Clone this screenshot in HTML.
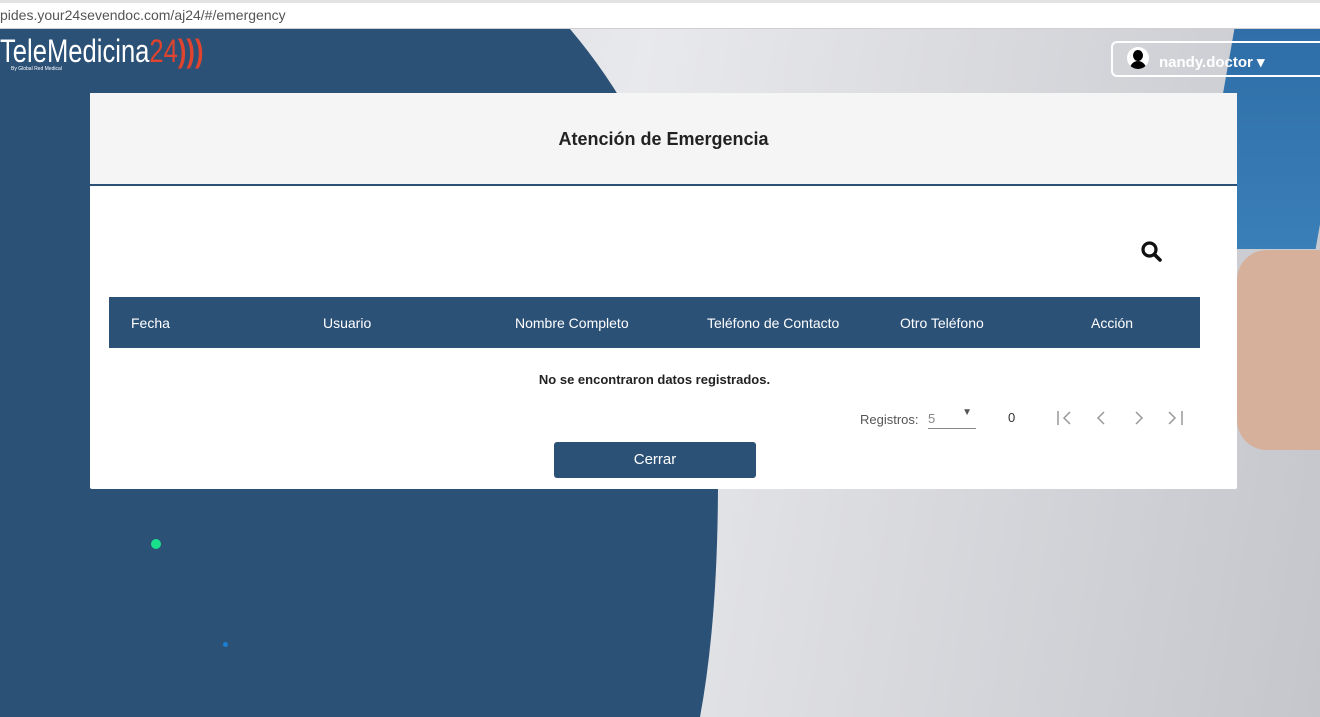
<!DOCTYPE html>
<html><head><meta charset="utf-8"><style>
*{margin:0;padding:0;box-sizing:border-box}
html,body{width:1320px;height:717px;overflow:hidden}
body{font-family:"Liberation Sans",sans-serif;position:relative;background:#2c5177}
.wrap{position:absolute;left:0;top:0;width:1320px;height:717px;overflow:hidden}
.url{position:absolute;top:0;left:0;width:1320px;height:29px;background:#fff;border-top:3px solid #e3e3e3;border-bottom:1px solid #d0d0d0;color:#555;font-size:14px;line-height:24px}
.photo{position:absolute;top:29px;left:0;width:1320px;height:688px;background:linear-gradient(100deg,#c9cdd3 0%,#e8e9ec 45%,#d8d9dd 70%,#c4c6cc 100%)}
.blue2{position:absolute;top:29px;left:1215px;width:120px;height:220px;background:linear-gradient(180deg,#2f6ea8,#3a7fb8);transform:skewX(-10deg)}
.skin{position:absolute;top:250px;left:1237px;width:90px;height:200px;background:#d6b09a;border-radius:30px 0 0 30px}
.card{position:absolute;left:90px;top:93px;width:1147px;height:396px;background:#fff;border-radius:2px}
.head{height:93px;background:#f5f5f5;border-bottom:2px solid #2c5177;text-align:center;font-weight:bold;font-size:18px;line-height:92px;color:#222}
.th{position:absolute;top:222px;color:#fff;font-size:14px}
.btn{position:absolute;left:464px;top:349px;width:202px;height:36px;background:#2c5177;color:#fff;border-radius:3px;text-align:center;line-height:36px;font-size:15px}
.user{position:absolute;left:1111px;top:41px;width:215px;height:36px;border:2px solid #fff;border-radius:6px;color:#fff;font-size:15px;font-weight:bold}
</style></head><body><div class="wrap">
<div class="photo"></div>
<div class="blue2"></div>
<div class="skin"></div>
<svg style="position:absolute;left:0;top:0" width="1320" height="717"><path d="M0 29 L570 29 Q715 200 718 480 Q718 620 700 717 L0 717 Z" fill="#2c5177"/></svg>
<div class="url">pides.your24sevendoc.com/aj24/#/emergency</div>
<div style="position:absolute;left:0;top:33px;font-size:32px;color:#fff;transform:scaleX(0.8);transform-origin:0 0;white-space:nowrap">TeleMedicina<span style="color:#e0432e">24</span><span style="color:#e0432e;font-weight:bold">)))</span></div>
<div style="position:absolute;left:11px;top:66px;font-size:5px;color:#fff">By Global Red Medical</div>
<div class="user"><div style="position:absolute;left:14px;top:4px;width:22px;height:22px;border-radius:50%;background:#fff;overflow:hidden"><div style="position:absolute;left:6px;top:3px;width:10px;height:11px;border-radius:50%;background:#000"></div><div style="position:absolute;left:3px;top:14px;width:16px;height:10px;border-radius:8px 8px 0 0;background:#000"></div></div><span style="position:absolute;left:46px;top:10px">nandy.doctor ▾</span></div>
<div class="card">
<div class="head">Atención de Emergencia</div>
<svg style="position:absolute;left:1050px;top:147px" width="24" height="24" viewBox="0 0 24 24"><circle cx="9.5" cy="9.5" r="6.5" fill="none" stroke="#111" stroke-width="3.2"/><line x1="14.5" y1="14.5" x2="20" y2="20" stroke="#111" stroke-width="3.6" stroke-linecap="round"/></svg>
<div style="position:absolute;left:19px;top:204px;width:1091px;height:51px;background:#2c5177"></div>
<div class="th" style="left:41px">Fecha</div>
<div class="th" style="left:233px">Usuario</div>
<div class="th" style="left:425px">Nombre Completo</div>
<div class="th" style="left:617px">Teléfono de Contacto</div>
<div class="th" style="left:810px">Otro Teléfono</div>
<div class="th" style="left:1001px">Acción</div>
<div style="position:absolute;left:0;width:1129px;top:279px;text-align:center;font-size:13px;font-weight:bold;color:#222">No se encontraron datos registrados.</div>
<div style="position:absolute;left:770px;top:319px;font-size:13px;color:#555">Registros:</div>
<div style="position:absolute;left:838px;top:318px;width:48px;height:18px;border-bottom:1px solid #888;font-size:13px;color:#888">5<span style="position:absolute;right:4px;top:-4px;font-size:10px;color:#555">▼</span></div>
<div style="position:absolute;left:918px;top:317px;font-size:13px;color:#333">0</div>
<svg style="position:absolute;left:966px;top:316px" width="130" height="18" stroke="#999" stroke-width="1.5" fill="none"><path d="M2 2v14M14 3l-6 6 6 6"/><path d="M48 3l-6 6 6 6"/><path d="M80 3l6 6-6 6"/><path d="M113 3l6 6-6 6M126 2v14"/></svg>
<div class="btn">Cerrar</div>
</div>
<div style="position:absolute;left:151px;top:539px;width:10px;height:10px;border-radius:50%;background:#19e08a"></div>
<div style="position:absolute;left:223px;top:642px;width:5px;height:5px;border-radius:50%;background:#1a7fd0"></div>
</div></body></html>
